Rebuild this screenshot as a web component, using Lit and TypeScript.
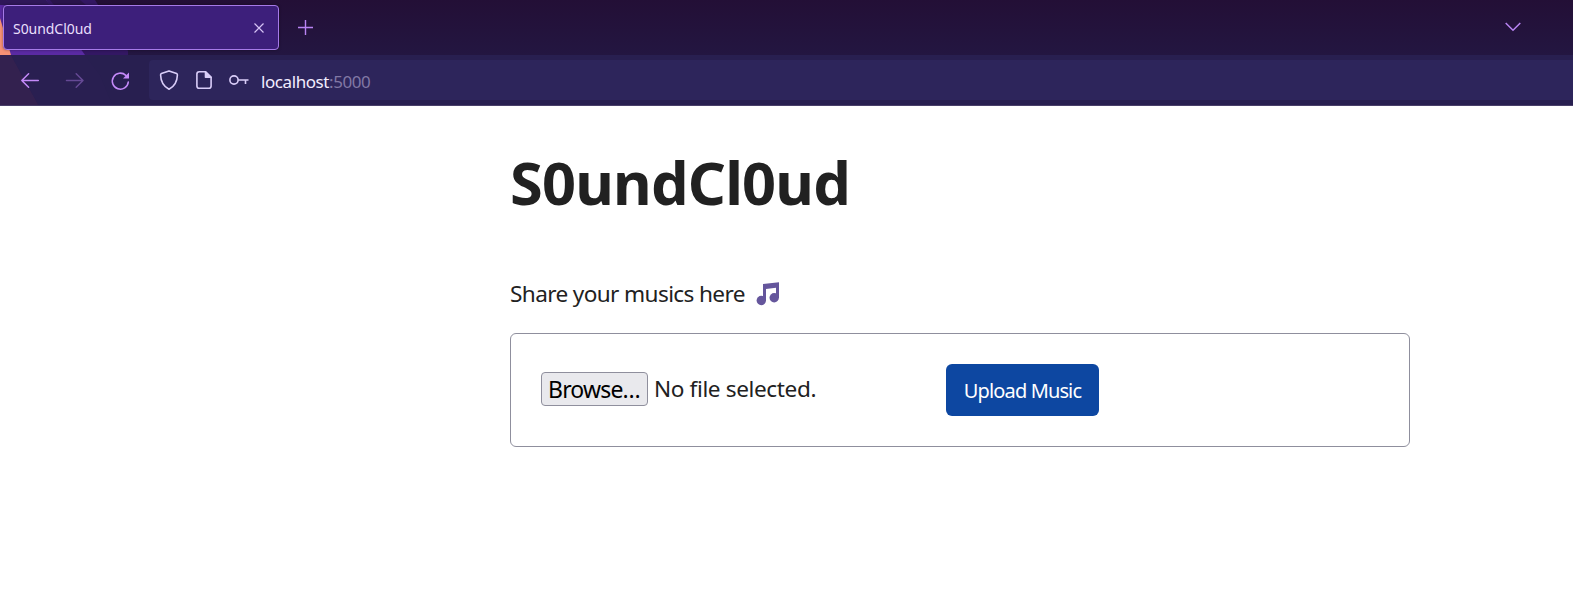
import { LitElement, html, css } from "lit";
import { customElement } from "lit/decorators.js";

@customElement("browser-chrome")
class BrowserChrome extends LitElement {
  static styles = css`
    :host { display: block; font-family: "Noto Sans", sans-serif; }
    svg { display: block; fill: none; flex: none; overflow: visible; }
    .frame { position: relative; height: 106px; background: #281f50; overflow: hidden; }
    .art { position: absolute; left: 0; top: 0; }
    .tabs { position: relative; height: 55px; display: flex; align-items: flex-start; }
    .sky { position: absolute; inset: 0 0 51px 0; background: linear-gradient(#230f36, #231641); }
    .tab {
      box-sizing: border-box; width: 276px; height: 45px; margin: 5px 0 0 3px;
      padding: 0 14px 0 9px; display: flex; align-items: center; justify-content: space-between;
      background: #3d1f7b; border: 1px solid #a67ae8; border-radius: 4px;
      box-shadow: 0 0 3px #0006; color: #e9dffc;
    }
    .name { font-size: 14px; line-height: 20px; letter-spacing: -0.05px; margin-top: 2px; }
    .plus { margin: 20px 0 0 19px; }
    .list { margin: 22px 52px 0 auto; }
    .bar { position: relative; height: 50px; border-bottom: 1px solid #493f69; display: flex; align-items: center; }
    .nav { width: 149px; display: flex; }
    .back { margin-left: 20px; }
    .forward { margin-left: 26px; opacity: .42; }
    .reload { margin-left: 27px; margin-top: 1px; }
    .url {
      flex: 1; height: 40px; display: flex; align-items: center;
      background: #2d255b; border-radius: 4px 0 0 4px; color: #f2edff;
    }
    .shield { margin-left: 10px; }
    .page { margin-left: 17px; }
    .key { margin-left: 17px; }
    .address { margin-left: 12px; font-size: 17px; line-height: 24px; letter-spacing: -0.42px; padding-top: 4px; }
    .port { color: #8178a4; }
  `;
  render() {
    return html`<div class="frame">
      <div class="sky"></div>
      <svg class="art" width="150" height="106">
        <path d="M0 0H95L128 51V55H0Z" fill="#331763" />
        <path d="M0 0H46L85 55H0Z" fill="#5a2aa3" />
        <path d="M0 0H46L50 5H0Z" fill="#2f1759" />
        <path d="M50 0H80L86 5H54Z" fill="#2a144c" />
        <path d="M0 18L11 55H0Z" fill="#f79175" />
        <path d="M0 55H11L39 106H0Z" fill="#33214f" />
        <path d="M11 55H85L100 75L113 106H39Z" fill="#291f51" />
      </svg>
      <div class="tabs">
        <div class="tab">
          <span class="name">S0undCl0ud</span>
          <svg width="10" height="10" stroke="#d6c3f5" stroke-width="1.2"><path d="M.5 .5L9.500 9.500M9.500 .5L.5 9.500" /></svg>
        </div>
        <svg class="plus" width="15" height="15" stroke="#b984f3" stroke-width="1.4"><path d="M7.500 0V15M0 7.500H15" /></svg>
        <svg class="list" width="16" height="10" stroke="#b984f3" stroke-width="1.5"><path d="M.7 1L8 8.200L15.300 1" /></svg>
      </div>
      <div class="bar">
        <div class="nav">
          <svg class="back" width="19" height="18" stroke="#c58af9" stroke-width="1.5" stroke-linecap="round" stroke-linejoin="round"><path d="M18.300 9.500H1.800M8.600 2.700L1.800 9.500L8.600 16.300" /></svg>
          <svg class="forward" width="19" height="18" stroke="#b984f3" stroke-width="1.500" stroke-linecap="round" stroke-linejoin="round"><path d="M1.500 9.500H18M11.200 2.700L18 9.500L11.200 16.300" /></svg>
          <svg class="reload" width="19" height="18" stroke="#c58af9" stroke-width="1.600" stroke-linecap="round"><path d="M17.300 10A8 8 0 1 1 14.800 3.300" /><path d="M18 .5V6.500H12Z" fill="#c58af9" stroke="none" /></svg>
        </div>
        <div class="url">
          <svg class="shield" width="20" height="20" stroke="#d9cdf8" stroke-width="1.6" stroke-linejoin="round"><path d="M10 .9L17.600 3.500Q18.500 3.900 18.400 5C18.200 11.500 15.600 16.400 10 19.200C4.400 16.400 1.800 11.500 1.600 5Q1.500 3.900 2.400 3.500Z" /></svg>
          <svg class="page" width="16" height="18" stroke="#d9cdf8" stroke-width="1.6" stroke-linejoin="round"><path d="M9.500 .8H3.200Q.9 .8 .9 3.100V14.900Q.9 17.200 3.200 17.200H12.800Q15.100 17.200 15.100 14.900V6.300Z" /><path d="M9.500 .8V6.300H15.100Z" fill="#d9cdf8" /></svg>
          <svg class="key" width="20" height="12" stroke="#d9cdf8" stroke-width="1.6"><circle cx="5" cy="6" r="4.100" /><path d="M9.100 6H19.500M16.500 6V10" /></svg>
          <span class="address">localhost<span class="port">:5000</span></span>
        </div>
      </div>
    </div>`;
  }
}

@customElement("upload-page")
class UploadPage extends LitElement {
  static styles = css`
    :host { display: block; width: 900px; margin-left: 510px; font-family: "Noto Sans", sans-serif; color: #212121; }
    h1 { margin: 0; padding-top: 36px; font-size: 59.5px; line-height: 80px; font-weight: 700; letter-spacing: -0.8px; white-space: nowrap; }
    .share { margin: 56px 0 0; height: 32px; display: flex; align-items: center; font-size: 22.6px; line-height: 32px; }
    .lead { letter-spacing: -0.62px; white-space: nowrap; }
    .note { margin-left: 11px; display: block; }
    .card {
      box-sizing: border-box; height: 114px; margin-top: 23px; padding-left: 30px;
      display: flex; align-items: center; border: 1px solid #8f8f9d; border-radius: 6px;
    }
    .file { width: 405px; display: flex; align-items: center; font-size: 22.6px; line-height: 32px; padding-bottom: 2px; }
    .browse {
      box-sizing: border-box; width: 107px; height: 34px; padding: 0 1px 0 0; border: 1px solid #8f8f9d; border-radius: 4px;
      background: #e9e9ed; color: #000; font: 23px/32px "Noto Sans", sans-serif; letter-spacing: -0.82px;
    }
    .status { margin-left: 6px; letter-spacing: -0.38px; white-space: nowrap; }
    .upload {
      width: 153px; height: 52px; padding: 2px 0 0; border: 0; border-radius: 6px; background: #0d47a1; color: #fff;
      font: 20px/28px "Noto Sans", sans-serif; letter-spacing: -0.87px;
    }
  `;
  render() {
    return html`
      <h1>S0undCl0ud</h1>
      <p class="share">
        <span class="lead">Share your musics here</span>
        <svg class="note" width="24" height="24" fill="#65569c"><path d="M7 2L23 .3V16H20V5.800L10 6.900V19H7Z" /><circle cx="5.300" cy="18.500" r="4.700" /><circle cx="18.200" cy="15.800" r="4.700" /></svg>
      </p>
      <div class="card">
        <div class="file"><button class="browse">Browse…</button><span class="status">No file selected.</span></div>
        <button class="upload">Upload Music</button>
      </div>`;
  }
}

@customElement("app-root")
class AppRoot extends LitElement {
  static styles = css`:host { display: block; height: 592px; background: #fff; overflow: hidden; }`;
  render() {
    return html`<browser-chrome></browser-chrome><upload-page></upload-page>`;
  }
}
